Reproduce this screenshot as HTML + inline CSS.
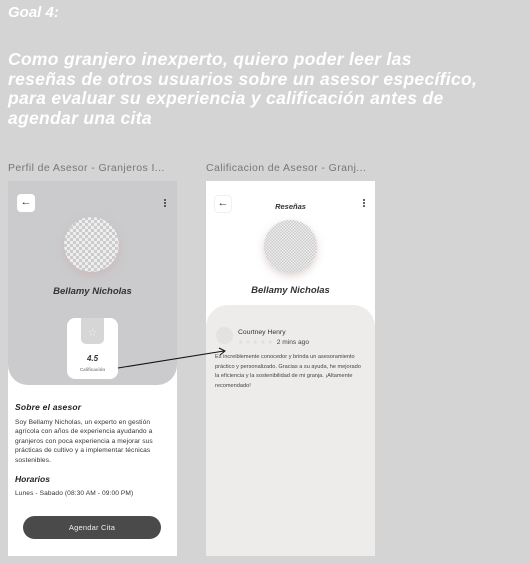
<!DOCTYPE html>
<html><head><meta charset="utf-8"><style>
*{margin:0;padding:0;box-sizing:border-box}
body{width:530px;height:563px;background:#d4d4d4;font-family:"Liberation Sans",sans-serif;position:relative;overflow:hidden}
.h{position:absolute;color:#fff;font-weight:bold;font-style:italic;white-space:nowrap}
.lbl{position:absolute;font-size:10.5px;color:#777;letter-spacing:0.4px}
.frame{position:absolute;top:181px;width:169px;height:375px;background:#fff;overflow:hidden}
.abs{position:absolute;white-space:nowrap}
.av{position:absolute;border-radius:50%;background-color:#eee;background-image:linear-gradient(45deg,#ccc 25%,transparent 25%,transparent 75%,#ccc 75%),linear-gradient(45deg,#ccc 25%,transparent 25%,transparent 75%,#ccc 75%);background-size:6px 6px;background-position:0 0,3px 3px;box-shadow:0 3px 8px rgba(200,170,170,.5)}
.dots{position:absolute;width:2px;}
.dots i{display:block;width:2px;height:2px;background:#333;margin-bottom:1px;border-radius:1px}
</style></head><body>
<div class="h" style="left:8px;top:4px;font-size:15px">Goal 4:</div>
<div class="h" style="left:8px;top:50px;font-size:17.5px;line-height:19.5px;letter-spacing:0.3px">Como granjero inexperto, quiero poder leer las<br>reseñas de otros usuarios sobre un asesor específico,<br>para evaluar su experiencia y calificación antes de<br>agendar una cita</div>
<div class="lbl" style="left:8px;top:162px">Perfil de Asesor - Granjeros I...</div>
<div class="lbl" style="left:206px;top:162px">Calificacion de Asesor - Granj...</div>

<div class="frame" style="left:8px">
 <div class="abs" style="left:0;top:0;width:169px;height:204px;background:#cbcbcd;border-radius:0 0 20px 20px"></div>
 <div class="abs" style="left:9px;top:13px;width:18px;height:18px;background:#fff;border-radius:4px;font-size:11px;text-align:center;line-height:17px;color:#333">←</div>
 <div class="dots" style="left:156px;top:18px"><i></i><i></i><i></i></div>
 <div class="av" style="left:56px;top:36px;width:55px;height:55px"></div>
 <div class="abs" style="left:0;width:169px;top:105px;text-align:center;font-size:9.5px;font-weight:bold;font-style:italic;color:#333">Bellamy Nicholas</div>
 <div class="abs" style="left:59px;top:137px;width:51px;height:61px;background:#fff;border-radius:8px"></div>
 <div class="abs" style="left:73px;top:137px;width:23px;height:26px;background:#d6d6d6;border-radius:0 0 5px 5px;color:#eee;font-size:11px;text-align:center;line-height:30px">☆</div>
 <div class="abs" style="left:59px;width:51px;top:173px;text-align:center;font-size:8px;font-weight:bold;font-style:italic;color:#333">4.5</div>
 <div class="abs" style="left:59px;width:51px;top:186px;text-align:center;font-size:4.5px;color:#888;font-weight:bold">Calificación</div>
 <div class="abs" style="left:7px;top:221px;font-size:8.5px;font-weight:bold;font-style:italic;color:#222;letter-spacing:0.2px">Sobre el asesor</div>
 <div class="abs" style="left:7px;top:237px;font-size:6.6px;line-height:9.4px;color:#333;letter-spacing:0.1px">Soy Bellamy Nicholas, un experto en gestión<br>agrícola con años de experiencia ayudando a<br>granjeros con poca experiencia a mejorar sus<br>prácticas de cultivo y a implementar técnicas<br>sostenibles.</div>
 <div class="abs" style="left:7px;top:293px;font-size:8.5px;font-weight:bold;font-style:italic;color:#222">Horarios</div>
 <div class="abs" style="left:7px;top:309px;font-size:6.6px;color:#333;letter-spacing:0.1px">Lunes - Sabado (08:30 AM - 09:00 PM)</div>
 <div class="abs" style="left:15px;top:335px;width:138px;height:23px;background:#4a4a4a;border-radius:12px;color:#eee;font-size:7.5px;text-align:center;line-height:23px;letter-spacing:0.2px">Agendar Cita</div>
</div>

<div class="frame" style="left:206px">
 <div class="abs" style="left:8px;top:14px;width:18px;height:18px;border:1px solid #f0f0f0;border-radius:4px;font-size:11px;text-align:center;line-height:15px;color:#333">←</div>
 <div class="abs" style="left:0;width:169px;top:21px;text-align:center;font-size:7.5px;font-weight:bold;font-style:italic;color:#333">Reseñas</div>
 <div class="dots" style="left:157px;top:18px"><i></i><i></i><i></i></div>
 <div class="av" style="left:58px;top:39px;width:53px;height:53px;background-size:3px 3px;background-position:0 0,1.5px 1.5px"></div>
 <div class="abs" style="left:0;width:169px;top:104px;text-align:center;font-size:9.5px;font-weight:bold;font-style:italic;color:#333">Bellamy Nicholas</div>
 <div class="abs" style="left:0;top:124px;width:169px;height:260px;background:#edeceb;border-radius:22px 22px 0 0"></div>
 <div class="abs" style="left:10px;top:146px;width:17px;height:17px;border-radius:50%;background:#e2e2e2"></div>
 <div class="abs" style="left:32px;top:148px;font-size:6.8px;color:#333">Courtney Henry</div>
 <div class="abs" style="left:32px;top:158px;font-size:6px;color:#ddd;letter-spacing:2px">★★★★★<span style="color:#444;letter-spacing:0;font-size:6.6px"> 2 mins ago</span></div>
 <div class="abs" style="left:9px;top:172px;font-size:5.6px;line-height:9.5px;color:#444">Es increiblemente conocedor y brinda un asesoramiento<br>práctico y personalizado. Gracias a su ayuda, he mejorado<br>la eficiencia y la sostenibilidad de mi granja. ¡Altamente<br>recomendado!</div>
</div>

<svg style="position:absolute;left:0;top:0" width="530" height="563"><line x1="118" y1="368" x2="224" y2="351" stroke="#111" stroke-width="1"/><path d="M219 348 L225 351 L220 355" fill="none" stroke="#111" stroke-width="1"/></svg>
</body></html>
